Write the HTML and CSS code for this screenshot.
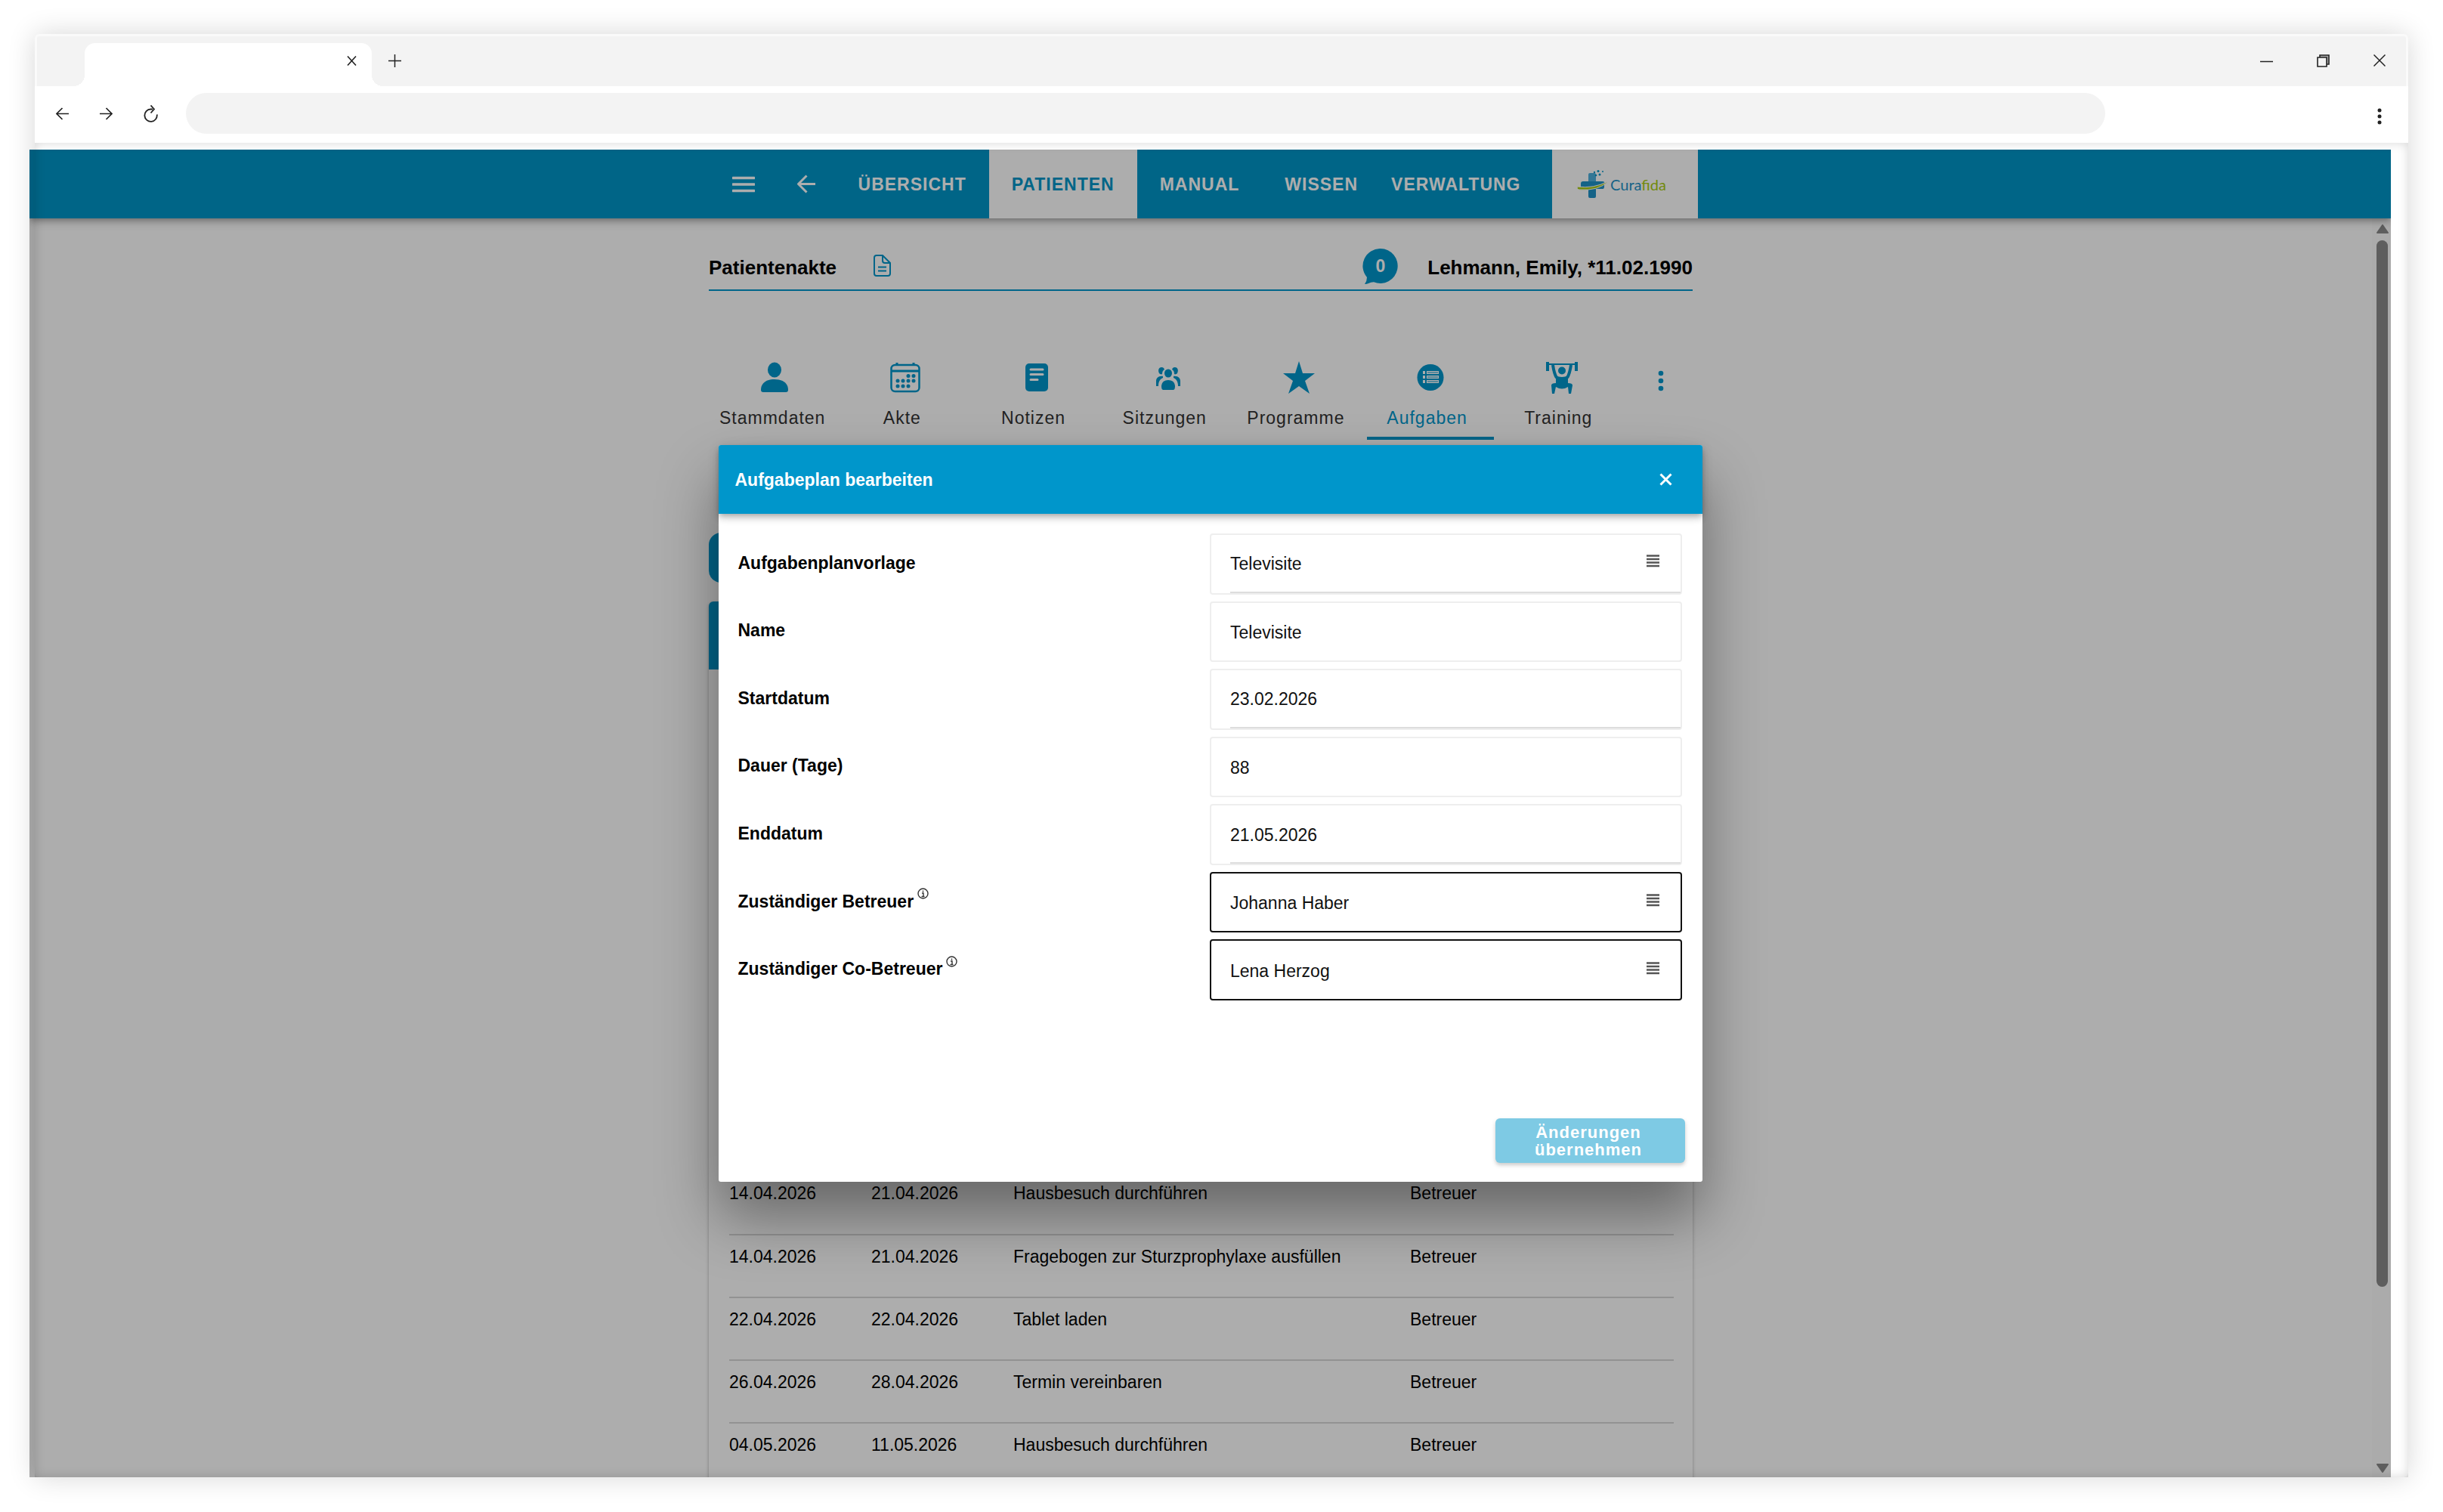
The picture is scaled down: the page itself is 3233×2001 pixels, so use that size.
FILE: index.html
```html
<!DOCTYPE html>
<html lang="de">
  <head>
    <meta charset="utf-8">
    <meta name="viewport" content="width=device-width, initial-scale=1">
    <title>Aufgabeplan bearbeiten</title>
    <link rel="stylesheet" href="styles.css">
  </head>

  <body>
    <div class="browser">
      <!-- Tableiste -->
      <div class="tabstrip">
        <div class="browser-tab">
          <button type="button" class="icon-btn" aria-label="Tab schließen">
            <svg width="13" height="13" viewBox="0 0 13 13"><path d="M1 0.500l11 12M12 0.500L1 12.500" stroke="#222" stroke-width="1.600"/></svg>
          </button>
        </div>
        <button type="button" class="icon-btn new-tab" aria-label="Neuer Tab">
          <svg width="17" height="17" viewBox="0 0 17 17"><path d="M8.500 0v17M0 8.500h17" stroke="#222" stroke-width="1.500"/></svg>
        </button>
        <div class="window-controls">
          <button type="button" class="icon-btn" aria-label="Minimieren">
            <svg width="17" height="17" viewBox="0 0 17 17"><path d="M0 9.500h17" stroke="#222" stroke-width="1.500"/></svg>
          </button>
          <button type="button" class="icon-btn" aria-label="Verkleinern">
            <svg width="17" height="17" viewBox="0 0 17 17"><path d="M4 4V1h12v12h-3" fill="#aaa" stroke="#222" stroke-width="1.600"/><path d="M1 4h12v12H1z" fill="#f3f3f3" stroke="#222" stroke-width="1.600"/></svg>
          </button>
          <button type="button" class="icon-btn" aria-label="Fenster schließen">
            <svg width="16" height="16" viewBox="0 0 16 16"><path d="M0.500 0.500l15 15M15.500 0.500l-15 15" stroke="#222" stroke-width="1.500"/></svg>
          </button>
        </div>
      </div>

      <!-- Adressleiste -->
      <div class="toolbar">
        <button type="button" class="icon-btn" aria-label="Zurück">
          <svg width="17" height="17" viewBox="0 0 17 17"><path d="M17 8.500H1.500M8.500 1l-7.500 7.500 7.500 7.500" fill="none" stroke="#222" stroke-width="1.700"/></svg>
        </button>
        <button type="button" class="icon-btn" aria-label="Vorwärts">
          <svg width="17" height="17" viewBox="0 0 17 17"><path d="M0 8.500h15.500M8.500 1l7.500 7.500-7.500 7.500" fill="none" stroke="#222" stroke-width="1.700"/></svg>
        </button>
        <button type="button" class="icon-btn" aria-label="Neu laden">
          <svg width="19" height="23" viewBox="0 0 19 23"><path d="M12 5.500H9.500A8.200 8.200 0 1 0 17.700 12.500" fill="none" stroke="#222" stroke-width="1.800"/><path d="M9.500 0.500l4.500 5-4.500 5" fill="none" stroke="#222" stroke-width="1.800"/></svg>
        </button>
        <input type="text" class="address" aria-label="Adresse">
        <button type="button" class="icon-btn browser-menu" aria-label="Menü">
          <svg width="6" height="22" viewBox="0 0 6 22" fill="#222"><circle cx="3" cy="3" r="2.500"/><circle cx="3" cy="11" r="2.500"/><circle cx="3" cy="19" r="2.500"/></svg>
        </button>
      </div>

      <div class="page">
        <div class="app">
          <header class="app-header">
            <div class="header-inner">
              <button type="button" class="icon-btn menu-btn" aria-label="Menü">
                <svg width="30" height="22" viewBox="0 0 30 22"><path d="M1 2.500h28M1 11h28M1 19.500h28" stroke="#fff" stroke-width="3.500" stroke-linecap="round"/></svg>
              </button>
              <button type="button" class="icon-btn" aria-label="Zurück">
                <svg width="25" height="25" viewBox="0 0 25 25"><path d="M24 12.500H2M12.500 1.500l-11 11 11 11" fill="none" stroke="#fff" stroke-width="3"/></svg>
              </button>
              <nav class="main-nav">
                <a href="#">ÜBERSICHT</a>
                <a href="#" class="active">PATIENTEN</a>
                <a href="#">MANUAL</a>
                <a href="#">WISSEN</a>
                <a href="#" class="last">VERWALTUNG</a>
              </nav>
              <div class="logo">
                <svg width="41" height="38" viewBox="0 0 41 38">
                  <path d="M15 6q0-2 2-2h6q2 0 2 2v10h-10z" fill="#4db0dc"/>
                  <path d="M5 18q0-3 3-3h26q3 0 2 3v4q0 3-2 3h-9v10q0 2-2 2h-6q-2 0-2-2v-10H8q-3 0-3-3z" fill="#1f93c8"/>
                  <path d="M0 22q22 3 41-7-12 13-39 11-2-1-2-4z" fill="#a9cc12" stroke="#fff" stroke-width="1"/>
                  <g fill="#0096c8"><circle cx="23" cy="3" r="1.200"/><circle cx="28" cy="1.500" r="1.500"/><circle cx="34" cy="2" r="1"/><circle cx="25" cy="7" r="1.300"/><circle cx="30" cy="6" r="1.500"/></g>
                </svg>
                <span class="logo-text">Cura<span class="logo-green">fida</span></span>
              </div>
            </div>
          </header>

          <div class="app-body">
            <main class="content">
              <div class="record-bar">
                <h1>Patientenakte</h1>
                <svg class="doc-icon" width="23" height="29" viewBox="0 0 23 29" fill="none" stroke="#0096cb" stroke-width="2">
                  <path d="M4 1h8l10 10v14q0 3-3 3H4q-3 0-3-3V4q0-3 3-3z"/><path d="M12 1v7q0 3 3 3h7"/><path d="M6 16.500h11M6 21.500h11"/>
                </svg>
                <div class="messages">
                  <svg width="47" height="47" viewBox="0 0 47 47"><path d="M24 0a23 23 0 1 1-9 44.300q-4 0-7 1.700-2 1-5 1 3-4 3-9A23 23 0 0 1 24 0z" fill="#0096cb"/></svg>
                  <span class="message-count">0</span>
                </div>
                <h1>Lehmann, Emily, *11.02.1990</h1>
              </div>

              <nav class="record-tabs">
                <a href="#">
                  <svg width="44" height="43" viewBox="0 0 44 43" fill="#0096cb"><ellipse cx="22" cy="11.500" rx="9" ry="10"/><path d="M4 38c0-9 7-14 18-14s18 5 18 14q0 3-3 3H7q-3 0-3-3z"/></svg>
                  <span>Stammdaten</span>
                </a>
                <a href="#">
                  <svg width="44" height="43" viewBox="0 0 44 43" fill="none" stroke="#0096cb" stroke-width="2.500">
                    <rect x="3.500" y="5" width="37" height="35" rx="5"/><path d="M4 13h37" stroke-width="3"/><path d="M11 2v4M33 2v4" stroke-width="3"/>
                    <g fill="#0096cb" stroke="none"><circle cx="26" cy="19.500" r="2.500"/><circle cx="33" cy="19.500" r="2.500"/><circle cx="12" cy="26" r="2.500"/><circle cx="19" cy="26" r="2.500"/><circle cx="26" cy="26" r="2.500"/><circle cx="33" cy="26" r="2.500"/><circle cx="12" cy="33" r="2.500"/><circle cx="19" cy="33" r="2.500"/><circle cx="26" cy="33" r="2.500"/></g>
                  </svg>
                  <span>Akte</span>
                </a>
                <a href="#">
                  <svg width="44" height="43" viewBox="0 0 44 43"><rect x="7" y="3" width="30" height="37" rx="5" fill="#0096cb"/><path d="M14 11h16M14 17.500h16M14 24.500h9" stroke="#fff" stroke-width="3" stroke-linecap="round"/></svg>
                  <span>Notizen</span>
                </a>
                <a href="#">
                  <svg width="44" height="43" viewBox="0 0 44 43" fill="#0096cb">
                    <ellipse cx="22" cy="16" rx="5" ry="5.500"/><path d="M13 34q0-9 9-9t9 9q0 3-2 4H15q-2-1-2-4z"/>
                    <path d="M16 9c-4-3-9 1-6 7 1 1 3 2 4 1 0-3 1-5 3-6zM28 9c4-3 9 1 6 7-1 1-3 2-4 1 0-3-1-5-3-6z"/>
                    <path d="M15 20c-6-1-9 3-9 6v7h3c0-6 2-9 6-11zM29 20c6-1 9 3 9 6v7h-3c0-6-2-9-6-11z"/>
                  </svg>
                  <span>Sitzungen</span>
                </a>
                <a href="#">
                  <svg width="44" height="43" viewBox="0 0 44 43" fill="#0096cb"><path d="M22 0l5 16h16L30 26l6 17-14-10L8 43l6-17L1 16h16z"/></svg>
                  <span>Programme</span>
                </a>
                <a href="#" class="active">
                  <svg width="44" height="43" viewBox="0 0 44 43"><circle cx="22" cy="21.500" r="17.500" fill="#0096cb"/><g fill="#fff"><path d="M12 13h3v4h-3zM17 13h16v4H17zM12 19h3v4h-3zM17 19h16v4H17zM12 25h3v4h-3zM17 25h16v4H17z"/></g><path d="M18 15h14M18 21h14M18 27h14" stroke="#0096cb" stroke-width="1"/></svg>
                  <span>Aufgaben</span>
                </a>
                <a href="#">
                  <svg width="44" height="43" viewBox="0 0 44 43" fill="none" stroke="#0096cb" stroke-width="3">
                    <path d="M3 1v12M41 1v12" stroke-width="4"/><path d="M3 4h38" stroke-width="2"/>
                    <path d="M10 5c1 7 2 12 5 17M34 5c-1 7-2 12-5 17" stroke-width="4"/>
                    <ellipse cx="22" cy="12.500" rx="5" ry="5" fill="#0096cb" stroke="none"/>
                    <path d="M14 19q8 4 16 0v10q6 0 6 3l-2 11h-3l-1-9q-8 5-16 0l-2 9H9L8 32q0-3 6-3z" fill="#0096cb" stroke="none"/>
                  </svg>
                  <span>Training</span>
                </a>
                <button type="button" class="icon-btn more" aria-label="Mehr">
                  <svg width="8" height="28" viewBox="0 0 8 28" fill="#0096cb"><circle cx="4" cy="4" r="3.300"/><circle cx="4" cy="14" r="3.300"/><circle cx="4" cy="24" r="3.300"/></svg>
                </button>
              </nav>

              <button type="button" class="action-btn" aria-label="Aufgabenplan"></button>

              <section class="task-card">
                <div class="card-header"></div>
                <table class="tasks">
                  <tr>
                    <td class="date">14.04.2026</td>
                    <td class="date">21.04.2026</td>
                    <td class="task">Hausbesuch durchführen</td>
                    <td>Betreuer</td>
                  </tr>
                  <tr>
                    <td>14.04.2026</td>
                    <td>21.04.2026</td>
                    <td>Fragebogen zur Sturzprophylaxe ausfüllen</td>
                    <td>Betreuer</td>
                  </tr>
                  <tr>
                    <td>22.04.2026</td>
                    <td>22.04.2026</td>
                    <td>Tablet laden</td>
                    <td>Betreuer</td>
                  </tr>
                  <tr>
                    <td>26.04.2026</td>
                    <td>28.04.2026</td>
                    <td>Termin vereinbaren</td>
                    <td>Betreuer</td>
                  </tr>
                  <tr>
                    <td>04.05.2026</td>
                    <td>11.05.2026</td>
                    <td>Hausbesuch durchführen</td>
                    <td>Betreuer</td>
                  </tr>
                </table>
              </section>
            </main>

            <div class="scrollbar">
              <svg width="16" height="12" viewBox="0 0 16 12"><path d="M8 1l7 10H1z" fill="#8b8b8b" stroke="#8b8b8b" stroke-width="2" stroke-linejoin="round"/></svg>
              <div class="scroll-track"><div class="scroll-thumb"></div></div>
              <svg width="16" height="12" viewBox="0 0 16 12"><path d="M8 11L1 1h14z" fill="#8b8b8b" stroke="#8b8b8b" stroke-width="2" stroke-linejoin="round"/></svg>
            </div>
          </div>

          <!-- Dialog -->
          <div class="backdrop">
            <div class="modal" role="dialog" aria-labelledby="modalTitle">
              <div class="modal-header">
                <h2 id="modalTitle">Aufgabeplan bearbeiten</h2>
                <button type="button" class="icon-btn" aria-label="Schließen">
                  <svg width="17" height="17" viewBox="0 0 17 17"><path d="M1.500 1.500l14 14M15.500 1.500l-14 14" stroke="#fff" stroke-width="3"/></svg>
                </button>
              </div>

              <form class="plan-form">
                <label for="template">Aufgabenplanvorlage</label>
                <div class="field">
                  <div class="field-inner lined">
                    <input type="text" id="template" value="Televisite">
                    <button type="button" class="icon-btn" aria-label="Auswählen">
                      <svg width="17" height="17" viewBox="0 0 17 17"><path d="M0 1.500h17M0 6h17M0 10.500h17M0 15h17" stroke="#555" stroke-width="2.600"/></svg>
                    </button>
                  </div>
                </div>

                <label for="name">Name</label>
                <div class="field">
                  <div class="field-inner">
                    <input type="text" id="name" value="Televisite">
                  </div>
                </div>

                <label for="start">Startdatum</label>
                <div class="field">
                  <div class="field-inner lined">
                    <input type="text" id="start" value="23.02.2026">
                  </div>
                </div>

                <label for="days">Dauer (Tage)</label>
                <div class="field">
                  <div class="field-inner">
                    <input type="text" id="days" value="88">
                  </div>
                </div>

                <label for="end">Enddatum</label>
                <div class="field">
                  <div class="field-inner lined">
                    <input type="text" id="end" value="21.05.2026">
                  </div>
                </div>

                <label for="carer">Zuständiger Betreuer
                  <svg class="info" width="15" height="15" viewBox="0 0 15 15" fill="none" stroke="#333" stroke-width="1.400"><circle cx="7.500" cy="7.500" r="6.500"/><path d="M7.500 3.500v2M6 7h2v4M5.500 11.500h4"/></svg>
                </label>
                <div class="field editable">
                  <div class="field-inner">
                    <input type="text" id="carer" value="Johanna Haber">
                    <button type="button" class="icon-btn" aria-label="Auswählen">
                      <svg width="17" height="17" viewBox="0 0 17 17"><path d="M0 1.500h17M0 6h17M0 10.500h17M0 15h17" stroke="#555" stroke-width="2.600"/></svg>
                    </button>
                  </div>
                </div>

                <label for="cocarer">Zuständiger Co-Betreuer
                  <svg class="info" width="15" height="15" viewBox="0 0 15 15" fill="none" stroke="#333" stroke-width="1.400"><circle cx="7.500" cy="7.500" r="6.500"/><path d="M7.500 3.500v2M6 7h2v4M5.500 11.500h4"/></svg>
                </label>
                <div class="field editable">
                  <div class="field-inner">
                    <input type="text" id="cocarer" value="Lena Herzog">
                    <button type="button" class="icon-btn" aria-label="Auswählen">
                      <svg width="17" height="17" viewBox="0 0 17 17"><path d="M0 1.500h17M0 6h17M0 10.500h17M0 15h17" stroke="#555" stroke-width="2.600"/></svg>
                    </button>
                  </div>
                </div>
              </form>

              <div class="modal-footer">
                <button type="button" class="save-btn" disabled>Änderungen<br>übernehmen</button>
              </div>
            </div>
          </div>
        </div>
      </div>
    </div>
  </body>
</html>
```

FILE: styles.css
```css
* {
  box-sizing: border-box;
}

body {
  margin: 0;
  height: 100vh;
  padding: 45px 46px 46px;
  background: #fff;
  font-family: "Liberation Sans", Arial, sans-serif;
  font-size: 23px;
  line-height: 28px;
  color: #000;
  overflow: hidden;
}

h1, h2 {
  margin: 0;
  font-weight: bold;
}

a {
  color: inherit;
  text-decoration: none;
}

svg {
  display: block;
  flex: none;
}

.icon-btn {
  display: flex;
  align-items: center;
  padding: 0;
  border: none;
  background: none;
  cursor: pointer;
}

/* Browserfenster */
.browser {
  position: relative;
  display: flex;
  flex-direction: column;
  height: 100%;
  border-radius: 6px;
}

/* Schatten liegt auch über dem Seiteninhalt */
.browser::after {
  content: "";
  position: absolute;
  inset: 0;
  border-radius: 6px;
  box-shadow: 0 0 36px rgba(0, 0, 0, 0.16);
  pointer-events: none;
}

.tabstrip {
  display: flex;
  align-items: flex-end;
  height: 69px;
  padding: 0 27px 0 63px;
  border: 3px solid #fafafa;
  border-bottom: none;
  border-radius: 6px 6px 0 0;
  background: #f3f3f3;
}

.tabstrip .icon-btn {
  height: 46px;
  margin-bottom: 11px;
}

.browser-tab {
  position: relative;
  display: flex;
  justify-content: flex-end;
  width: 380px;
  height: 57px;
  padding-right: 20px;
  border-radius: 14px 14px 0 0;
  background: #fff;
}

.browser-tab::before,
.browser-tab::after {
  content: "";
  position: absolute;
  bottom: 0;
  left: -15px;
  width: 15px;
  height: 15px;
  background: radial-gradient(circle at 0 0, transparent 15px, #fff 15px);
}

.browser-tab::after {
  left: 100%;
  background: radial-gradient(circle at 100% 0, transparent 15px, #fff 15px);
}

.new-tab {
  margin-left: 22px;
}

.window-controls {
  display: flex;
  gap: 58px;
  margin-left: auto;
}

.toolbar {
  display: flex;
  align-items: center;
  gap: 41px;
  height: 75px;
  padding: 0 35px 3px 28px;
  background: #fff;
}

.address {
  flex: 1;
  min-width: 0;
  height: 54px;
  margin-left: -4px;
  padding: 0 27px;
  border: none;
  border-radius: 27px;
  background: #f3f3f3;
  font: inherit;
}

.browser-menu {
  margin: 8px 0 0 319px;
}

.page {
  position: relative;
  flex: 1;
  min-height: 0;
  padding-top: 9px;
  background: #fff;
}

.page::after {
  content: "";
  position: absolute;
  inset: 0;
  box-shadow: inset 0 0 14px rgba(0, 0, 0, 0.16);
  pointer-events: none;
}

/* Anwendung */
.app {
  position: relative;
  display: flex;
  flex-direction: column;
  height: 100%;
  margin: 0 23px 0 -7px;
  background: #fff;
  overflow: hidden;
}

.app-header {
  position: relative;
  background: #0096c8;
  color: #fff;
  box-shadow: 0 3px 6px -2px rgba(0, 0, 0, 0.2), 0 6px 8px rgba(0, 0, 0, 0.14), 0 2px 16px rgba(0, 0, 0, 0.12);
}

.header-inner {
  display: flex;
  max-width: 1290px;
  height: 91px;
  margin: 0 auto;
  padding-left: 12px;
}

.menu-btn {
  margin-right: 56px;
}

.main-nav {
  display: flex;
  margin-left: auto;
}

.main-nav a {
  display: flex;
  align-items: center;
  padding: 0 30px;
  font-weight: bold;
  letter-spacing: 1px;
}

.main-nav .active {
  background: #fff;
  color: #0096c8;
}

.main-nav .last {
  padding: 0 41px 0 14px;
}

.logo {
  display: flex;
  align-items: center;
  justify-content: center;
  gap: 3px;
  width: 193px;
  padding-right: 8px;
  background: #fff;
}

.logo-text {
  font-family: Lato, sans-serif;
  font-size: 20px;
  color: #1f93c8;
}

.logo-green {
  color: #a9cc12;
}

.app-body {
  display: flex;
  flex: 1;
  min-height: 0;
}

.content {
  flex: 1;
  max-width: 1302px;
  margin: 0 auto;
}

.record-bar {
  display: flex;
  align-items: center;
  padding: 40px 0 5px;
  border-bottom: 2px solid #0096cb;
}

.record-bar h1 {
  font-size: 26px;
}

.doc-icon {
  margin: 0 0 4px 49px;
}

.messages {
  position: relative;
  margin: 0 39px 2px auto;
}

.message-count {
  position: absolute;
  inset: 9px 0 auto;
  text-align: center;
  font-weight: bold;
  color: #fff;
}

.record-tabs {
  display: flex;
  gap: 5px;
  margin-top: 93px;
  padding-left: 2px;
}

.record-tabs a {
  display: flex;
  flex-direction: column;
  align-items: center;
  gap: 18px;
  width: 169px;
  padding-bottom: 11px;
  border-bottom: 4px solid transparent;
  color: #333;
}

.record-tabs span {
  width: 100%;
  padding: 0 21px 0 12px;
  text-align: center;
  letter-spacing: 1px;
  white-space: nowrap;
}

.record-tabs .active {
  border-color: #0096cb;
  color: #0096cb;
}

.more {
  justify-content: center;
  width: 84px;
  height: 52px;
}

.action-btn {
  display: block;
  width: 100%;
  height: 66px;
  margin-top: 123px;
  border: none;
  border-radius: 16px;
  background: #0096cb;
}

.task-card {
  margin-top: 25px;
  border-radius: 6px 6px 0 0;
  box-shadow: 0 2px 4px rgba(0, 0, 0, 0.3);
}

.card-header {
  height: 90px;
  border-radius: 6px 6px 0 0;
  background: #0096cb;
}

.tasks {
  width: 1250px;
  margin: 665px 26px 0 27px;
  border-collapse: collapse;
  table-layout: fixed;
}

.tasks td {
  height: 83px;
  padding: 14px 0 0;
  border-bottom: 2px solid #d8d8d8;
  vertical-align: top;
}

.tasks .date {
  width: 188px;
}

.tasks .task {
  width: 525px;
}

.scrollbar {
  display: flex;
  flex-direction: column;
  align-items: center;
  gap: 9px;
  width: 25px;
  padding: 8px 0 6px 2px;
  background: #fcfcfc;
}

.scroll-track {
  flex: 1;
}

.scroll-thumb {
  width: 15px;
  height: 86%;
  border-radius: 8px;
  background: #8b8b8b;
}

/* Dialog */
.backdrop {
  position: absolute;
  inset: 0;
  display: flex;
  align-items: center;
  justify-content: center;
  background: rgba(0, 0, 0, 0.32);
}

.modal {
  width: 1302px;
  max-width: 100%;
  border-radius: 3px;
  background: #fff;
  box-shadow: 0 46px 79px rgba(0, 0, 0, 0.4);
}

.modal-header {
  display: flex;
  align-items: center;
  justify-content: space-between;
  height: 91px;
  padding: 0 40px 0 22px;
  border-radius: 3px 3px 0 0;
  background: #0096cb;
  color: #fff;
  box-shadow: 0 3px 6px -2px rgba(0, 0, 0, 0.2), 0 6px 8px rgba(0, 0, 0, 0.14), 0 2px 16px rgba(0, 0, 0, 0.12);
}

.modal-header h2 {
  font-size: 23px;
}

.plan-form {
  display: grid;
  grid-template-columns: 1fr 1fr;
  grid-auto-rows: 1fr;
  row-gap: 9px;
  height: 644px;
  padding: 26px 27px 0 26px;
}

.plan-form label {
  display: flex;
  align-items: center;
  padding-bottom: 3px;
  font-weight: bold;
}

.info {
  margin: 0 0 20px 5px;
}

.field {
  padding-left: 25px;
  border: 2px solid #eee;
  border-radius: 4px;
}

.editable {
  border-color: #111;
}

.field-inner {
  display: flex;
  height: 100%;
  padding-right: 28px;
}

.lined {
  border-bottom: 2px solid #ddd;
}

.field-inner input {
  flex: 1;
  min-width: 0;
  padding: 2px 0 0;
  border: none;
  background: none;
  font: inherit;
  color: #111;
}

.field-inner .icon-btn {
  padding-bottom: 5px;
}

.modal-footer {
  display: flex;
  justify-content: flex-end;
  padding: 156px 23px 25px;
}

.save-btn {
  width: 251px;
  height: 59px;
  padding: 0 4px 0 0;
  border: none;
  border-radius: 6px;
  background: #0096cb;
  box-shadow: 0 3px 5px rgba(0, 0, 0, 0.4);
  color: #fff;
  font: bold 22px/23px "Liberation Sans", Arial, sans-serif;
  letter-spacing: 1px;
  opacity: 0.5;
}
```
